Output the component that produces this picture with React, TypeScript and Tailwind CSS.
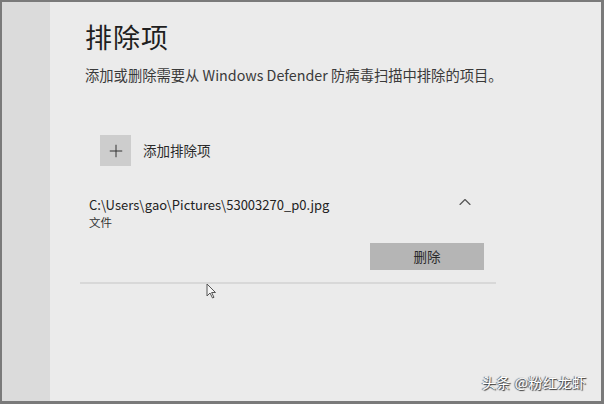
import { Plus, ChevronUp } from "lucide-react";

const font = { fontFamily: '"Noto Sans CJK SC", "Noto Sans", sans-serif' };

export default function App() {
  return (
    <div
      className="relative w-[604px] h-[404px] overflow-hidden bg-[#7a7a7a] pl-[2px] pt-[2px] pr-[3px] pb-[3px]"
      style={font}
    >
      <div className="flex h-full w-full bg-[#ebebeb]">
        <div className="w-[48px] shrink-0 bg-[#dbdbdb]" />
        <div className="flex-1 pl-[30px] pt-[17px]">
          <h1 className="ml-[5px] text-[27px] leading-[36px] text-[#1f1f1f] tracking-[1px]">排除项</h1>
          <p className="ml-[5px] mt-[10px] text-[14.3px] leading-[20px] text-[#3a3a3a]">
            添加或删除需要从 Windows Defender 防病毒扫描中排除的项目。
          </p>

          <div className="mt-[50px] ml-[20px] flex items-center gap-[12px]">
            <div className="flex h-[31px] w-[31px] items-center justify-center bg-[#cdcdcd]">
              <Plus size={20} strokeWidth={1.2} className="text-[#333]" />
            </div>
            <span className="text-[13.5px] text-[#2a2a2a]">添加排除项</span>
          </div>

          <div className="mt-[30px] w-[416px]">
            <div className="flex items-start justify-between pl-[9px] pr-[21px]">
              <div className="flex flex-col">
                <span className="text-[13px] leading-[18px] text-[#222]">
                  C:\Users\gao\Pictures\53003270_p0.jpg
                </span>
                <span className="text-[11.5px] leading-[16px] text-[#333]">文件</span>
              </div>
              <ChevronUp size={20} strokeWidth={1.4} className="mt-[-4px] text-[#555]" />
            </div>
            <div className="mt-[13px] flex justify-end pr-[12px]">
              <button className="h-[27px] w-[114px] bg-[#b5b5b5] text-[13.5px] text-[#2a2a2a]">
                删除
              </button>
            </div>
            <div className="mt-[12px] h-[2px] w-[416px] bg-[#d8d8d8]" />
          </div>
        </div>
      </div>

      <svg
        className="absolute left-[206px] top-[283px]"
        width="12"
        height="16"
        viewBox="0 0 12 16"
      >
        <path
          d="M1 1 L1 13 L4 10 L6.5 15 L8 14.3 L5.6 9.5 L9.5 9.5 Z"
          fill="#f5f5f5"
          stroke="#555"
          strokeWidth="1"
          strokeLinejoin="round"
        />
      </svg>

      <div
        className="absolute left-[482px] top-[372px] text-[14px] tracking-[0.5px] text-white"
        style={{ textShadow: "1px 1px 1px #333, -1px 0 1px #555" }}
      >
        头条 @粉红龙虾
      </div>
    </div>
  );
}
